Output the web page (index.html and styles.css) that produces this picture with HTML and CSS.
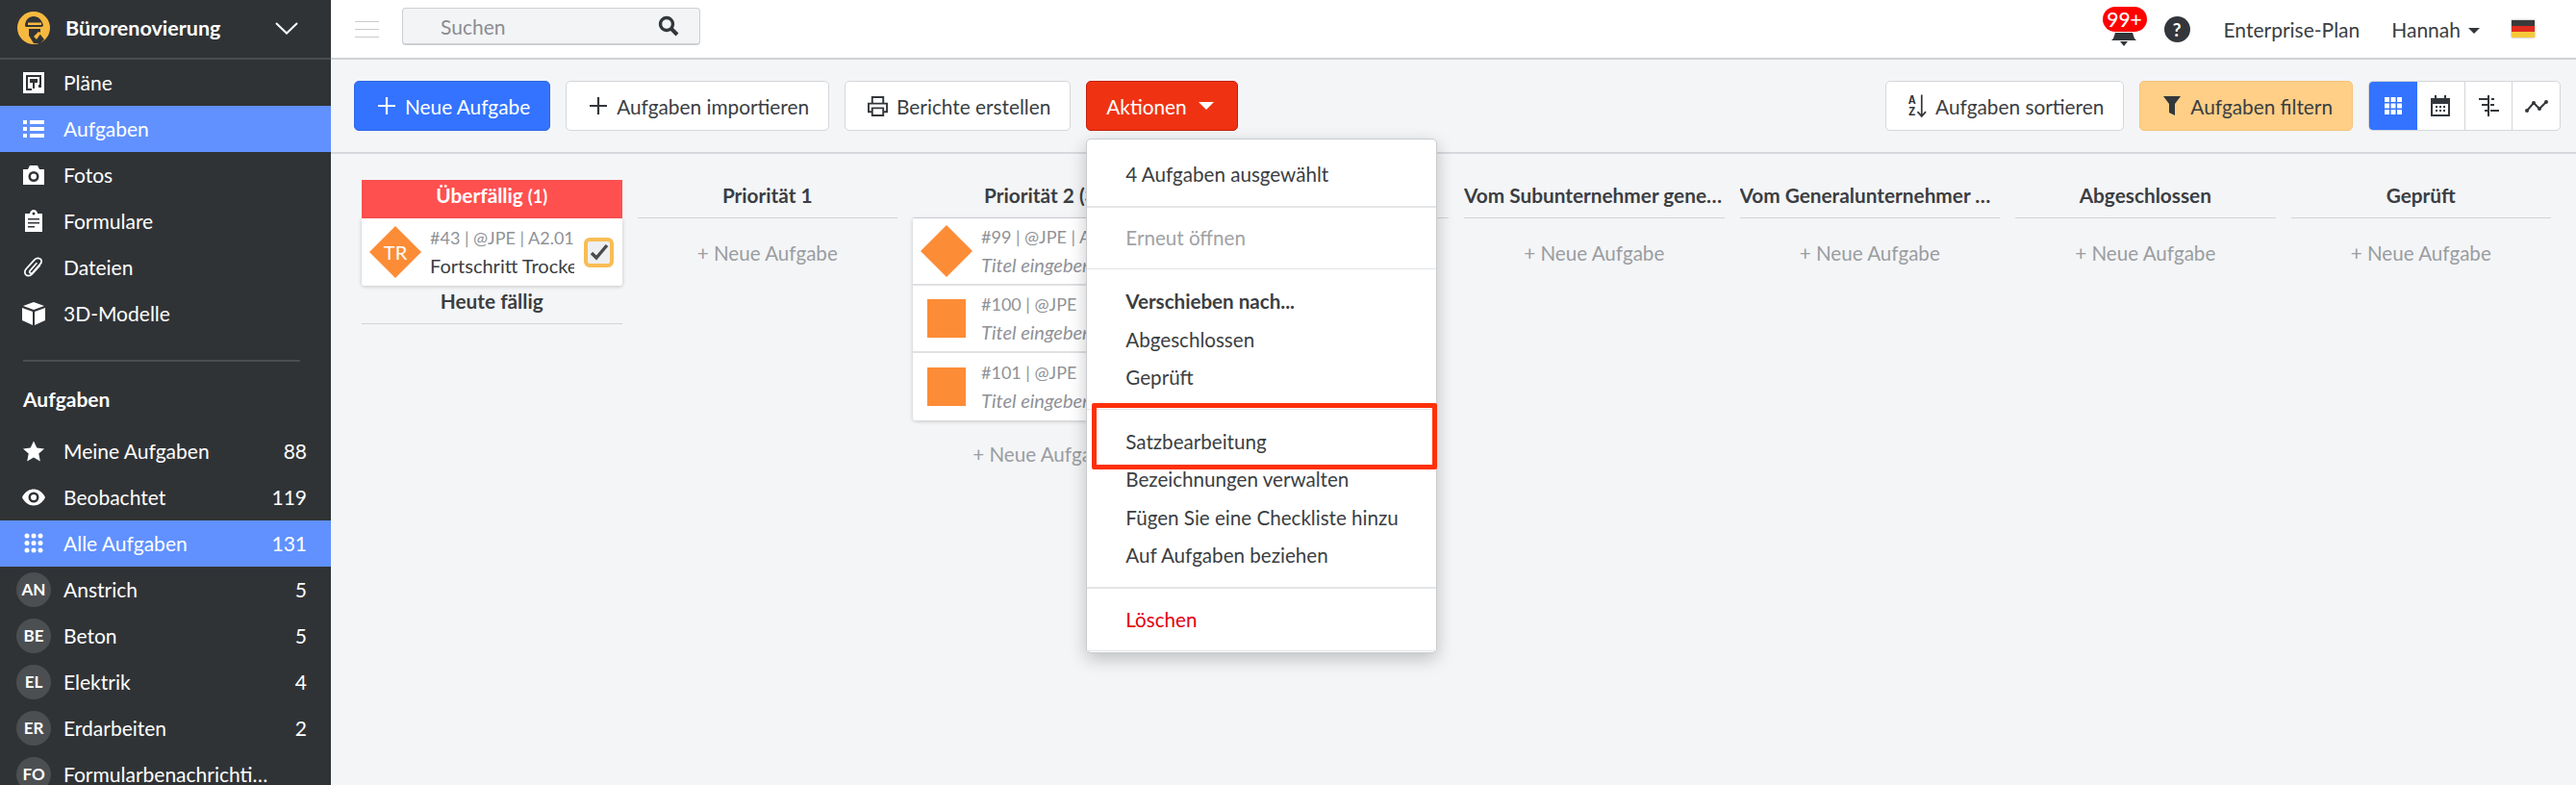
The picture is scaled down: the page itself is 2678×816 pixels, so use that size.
FILE: index.html
```html
<!DOCTYPE html>
<html lang="de">
<head>
<meta charset="utf-8">
<title>Aufgaben</title>
<link rel="stylesheet" href="styles.css">
</head>
<body>
<div class="app">
  <aside class="sidebar">
    <div class="project">
      <svg class="logo" viewBox="0 0 34 34"><circle cx="17" cy="17" r="17" fill="#f6b93f"/><path d="M8 15c0-6 4-10 9-10s9 4 10 10l-2 1H9z" fill="#303336"/><rect x="11" y="11.500" width="14" height="2.500" fill="#f6b93f"/><path d="M12 18h12v6l4 5-4 4h-7l-5-8z" fill="#303336"/><path d="M17 26l5-5 3 1-5 7z" fill="#f6b93f"/></svg>
      <span class="project-name">Bürorenovierung</span>
      <svg class="chevron" viewBox="0 0 24 13"><path d="M1 1l11 10.500L23 1" fill="none" stroke="#fff" stroke-width="2"/></svg>
    </div>
    <nav class="nav">
      <a class="nav-item"><span class="slot"><svg class="ic22" viewBox="0 0 22 22"><path d="M0 0h22v22H0z" fill="#fff"/><path d="M3 3h16v13h-3v-3h1V5H5v12h4v2H3zM7 7h8v4h-3v6h-2v-6H7z" fill="#303336"/></svg></span><span class="label">Pläne</span></a>
      <a class="nav-item active"><span class="slot"><svg class="ic22" viewBox="0 0 22 18"><path d="M0 0h4v4H0zM7 0h15v4H7zM0 7h4v4H0zM7 7h15v4H7zM0 14h4v4H0zM7 14h15v4H7z" fill="#fff"/></svg></span><span class="label">Aufgaben</span></a>
      <a class="nav-item"><span class="slot"><svg class="ic22" viewBox="0 0 22 20"><path fill-rule="evenodd" d="M0 4h5l2-4h8l2 4h5v16H0zM11 6a5.500 5.500 0 1 0 0 11 5.500 5.500 0 0 0 0-11zm0 2.500a3 3 0 1 1 0 6 3 3 0 0 1 0-6z" fill="#fff"/></svg></span><span class="label">Fotos</span></a>
      <a class="nav-item"><span class="slot"><svg class="ic18" viewBox="0 0 18 23"><path fill-rule="evenodd" d="M0 4h5c0-2 2-4 4-4s4 2 4 4h5v19H0zM9 2.500a1.500 1.500 0 1 0 0 3 1.500 1.500 0 0 0 0-3zM3 9v1.500h12V9zm0 4v1.500h12V13zm0 4v1.500h7V17z" fill="#fff"/></svg></span><span class="label">Formulare</span></a>
      <a class="nav-item"><span class="slot"><svg class="ic22" viewBox="0 0 22 23"><path d="M18 9L9 19c-2 2-5 2-6.500 .5S1 15 3 13L12 3c2-2 4-2 6-1s2 4 0 6l-8 9c-1 1-2.500 1-3 .5s-.5-2 .5-3l7-8" fill="none" stroke="#fff" stroke-width="1.800"/></svg></span><span class="label">Dateien</span></a>
      <a class="nav-item"><span class="slot"><svg class="ic24" viewBox="0 0 24 24"><path d="M12 0l11 4-11 4L1 4zM0 6l11 4v14L0 19zM24 6l-11 4v14l11-5z" fill="#fff"/></svg></span><span class="label">3D-Modelle</span></a>
    </nav>
    <hr class="side-rule">
    <h2 class="side-title">Aufgaben</h2>
    <nav class="nav">
      <a class="nav-item"><span class="slot"><svg class="ic22" viewBox="0 0 22 21"><path d="M11 0l3.300 7 7.700 .9-5.700 5.200L17.800 21 11 17l-6.800 4 1.500-7.900L0 7.900 7.700 7z" fill="#fff"/></svg></span><span class="label">Meine Aufgaben</span><span class="count">88</span></a>
      <a class="nav-item"><span class="slot"><svg class="ic24" viewBox="0 0 24 17"><path fill-rule="evenodd" d="M12 0c5 0 9.500 3.200 12 8.500C21.500 13.800 17 17 12 17S2.500 13.800 0 8.500C2.500 3.200 7 0 12 0zm0 3a5.500 5.500 0 1 0 0 11 5.500 5.500 0 0 0 0-11zm0 2.500a3 3 0 1 1 0 6 3 3 0 0 1 0-6z" fill="#fff"/></svg></span><span class="label">Beobachtet</span><span class="count">119</span></a>
      <a class="nav-item active"><span class="slot"><svg class="ic20" viewBox="0 0 20 21"><g fill="#fff"><circle cx="3" cy="3" r="2.500"/><circle cx="10" cy="3" r="2.500"/><circle cx="17" cy="3" r="2.500"/><circle cx="3" cy="10.500" r="2.500"/><circle cx="10" cy="10.500" r="2.500"/><circle cx="17" cy="10.500" r="2.500"/><circle cx="3" cy="18" r="2.500"/><circle cx="10" cy="18" r="2.500"/><circle cx="17" cy="18" r="2.500"/></g></svg></span><span class="label">Alle Aufgaben</span><span class="count">131</span></a>
      <a class="nav-item"><span class="avatar">AN</span><span class="label">Anstrich</span><span class="count">5</span></a>
      <a class="nav-item"><span class="avatar">BE</span><span class="label">Beton</span><span class="count">5</span></a>
      <a class="nav-item"><span class="avatar">EL</span><span class="label">Elektrik</span><span class="count">4</span></a>
      <a class="nav-item"><span class="avatar">ER</span><span class="label">Erdarbeiten</span><span class="count">2</span></a>
      <a class="nav-item"><span class="avatar">FO</span><span class="label label-clip">Formularbenachrichtigungen</span></a>
    </nav>
  </aside>

  <main class="main">
    <header class="topbar">
      <div class="top-left">
        <span class="burger"><i></i><i></i><i></i></span>
        <div class="search">
          <span class="search-text">Suchen</span>
          <svg class="search-icon" viewBox="0 0 22 22"><circle cx="9" cy="9" r="6.500" fill="none" stroke="#33373b" stroke-width="3.400"/><path d="M13.500 13.500L20 20" stroke="#33373b" stroke-width="4"/></svg>
        </div>
      </div>
      <div class="top-right">
        <span class="bell">
          <svg class="bell-icon" viewBox="0 0 26 14"><path d="M4 0h18l2 6 2 2H0l2-2zM9 9h8l-4 5z" fill="#33373b"/></svg>
          <span class="badge">99+</span>
        </span>
        <span class="help">?</span>
        <span class="top-link plan">Enterprise-Plan</span>
        <span class="top-link user">Hannah</span>
        <span class="caret-dark"></span>
        <svg class="flag" viewBox="0 0 24 18"><rect width="24" height="6" fill="#3a3a3a"/><rect y="6" width="24" height="6" fill="#e02b1f"/><rect y="12" width="24" height="6" fill="#f6c838"/></svg>
      </div>
    </header>

    <section class="toolbar">
      <div class="tool-group">
        <button class="btn btn-primary"><svg class="btn-ic" viewBox="0 0 20 20"><path d="M10 1v18M1 10h18" stroke="#fff" stroke-width="2.200"/></svg>Neue Aufgabe</button>
        <button class="btn"><svg class="btn-ic" viewBox="0 0 20 20"><path d="M10 1v18M1 10h18" stroke="#33373b" stroke-width="2.200"/></svg>Aufgaben importieren</button>
        <button class="btn"><svg class="btn-ic btn-ic-print" viewBox="0 0 22 22"><path d="M5 8V1h12v7M5 17H1V8h20v9h-4M5 13h12v8H5z" fill="none" stroke="#33373b" stroke-width="2"/></svg>Berichte erstellen</button>
        <div class="actions">
          <button class="btn btn-danger">Aktionen<span class="caret-white"></span></button>
          <div class="menu">
            <div class="menu-sec menu-sec-first"><div class="menu-item">4 Aufgaben ausgewählt</div></div>
            <div class="menu-sec menu-sec-second"><div class="menu-item muted">Erneut öffnen</div></div>
            <div class="menu-sec">
              <div class="menu-item strong">Verschieben nach...</div>
              <div class="menu-item">Abgeschlossen</div>
              <div class="menu-item">Geprüft</div>
            </div>
            <div class="menu-sec menu-sec-thick">
              <div class="menu-item">Satzbearbeitung</div>
              <div class="menu-item">Bezeichnungen verwalten</div>
              <div class="menu-item">Fügen Sie eine Checkliste hinzu</div>
              <div class="menu-item">Auf Aufgaben beziehen</div>
            </div>
            <div class="menu-sec menu-sec-last"><div class="menu-item danger">Löschen</div></div>
            <div class="highlight"></div>
          </div>
        </div>
      </div>
      <div class="tool-group">
        <button class="btn"><svg class="btn-ic sort-ic" viewBox="0 0 20 26"><text x="0" y="11" class="sort-letter">A</text><text x="0" y="24" class="sort-letter">Z</text><path d="M14.500 1v23M10 19.500l4.500 5 4.500-5" fill="none" stroke="#33373b" stroke-width="1.800"/></svg>Aufgaben sortieren</button>
        <button class="btn btn-filter"><svg class="btn-ic" viewBox="0 0 18 20"><path d="M0 0h18l-6 8v12l-6-3V8z" fill="#33373b"/></svg>Aufgaben filtern</button>
        <div class="views">
          <span class="view view-on"><svg class="view-ic" viewBox="0 0 18 18"><path d="M0 0h5v5H0zM6.500 0h5v5h-5zM13 0h5v5h-5zM0 6.500h5v5H0zM6.500 6.500h5v5h-5zM13 6.500h5v5h-5zM0 13h5v5H0zM6.500 13h5v5h-5zM13 13h5v5h-5z" fill="#fff"/></svg></span>
          <span class="view"><svg class="view-ic cal" viewBox="0 0 20 22"><path fill-rule="evenodd" d="M0 3h4V0h2v3h8V0h2v3h4v19H0zM2 9v11h16V9z" fill="#33373b"/><path d="M5 11h2v2H5zM9 11h2v2H9zM13 11h2v2h-2zM5 15h2v2H5zM9 15h2v2H9zM13 15h2v2h-2z" fill="#33373b"/></svg></span>
          <span class="view"><svg class="view-ic gantt" viewBox="0 0 21 22"><path d="M9 0h2v22H9zM0 3h9v2H0zM13 3h3v2h-3zM3 9h6v2H3zM12 9h4v2h-4zM6 15h3v2H6zM12 15h9v2h-9z" fill="#33373b"/></svg></span>
          <span class="view"><svg class="view-ic trend" viewBox="0 0 24 13"><path d="M2 11l7-8 6 6 7-7" fill="none" stroke="#33373b" stroke-width="2"/><g fill="#33373b"><circle cx="2" cy="11" r="2"/><circle cx="9" cy="3" r="2"/><circle cx="15" cy="9" r="2"/><circle cx="22" cy="2" r="2"/></g></svg></span>
        </div>
      </div>
    </section>

    <section class="board">
      <div class="col">
        <div class="col-head overdue">Überfällig <small>(1)</small></div>
        <div class="cards">
          <div class="card">
            <span class="mark"><span class="diamond"></span><span class="mark-text">TR</span></span>
            <div class="card-body"><div class="meta">#43 | @JPE | A2.01-1</div><div class="title">Fortschritt Trockenbau</div></div>
            <span class="check"><svg viewBox="0 0 20 18"><path d="M2 10l5 5L18 2" fill="none" stroke="#4a4d50" stroke-width="3.400"/></svg></span>
          </div>
        </div>
        <div class="col-head">Heute fällig</div>
      </div>
      <div class="col">
        <div class="col-head">Priorität 1</div>
        <div class="add">+ Neue Aufgabe</div>
      </div>
      <div class="col">
        <div class="col-head">Priorität 2 (3)</div>
        <div class="cards">
          <div class="card"><span class="mark"><span class="diamond"></span></span><div class="card-body"><div class="meta">#99 | @JPE | A2.01-1</div><div class="title empty">Titel eingeben</div></div></div>
          <div class="card"><span class="mark"><span class="square"></span></span><div class="card-body"><div class="meta">#100 | @JPE</div><div class="title empty">Titel eingeben</div></div></div>
          <div class="card"><span class="mark"><span class="square"></span></span><div class="card-body"><div class="meta">#101 | @JPE</div><div class="title empty">Titel eingeben</div></div></div>
        </div>
        <div class="add add-after">+ Neue Aufgabe</div>
      </div>
      <div class="col">
        <div class="col-head">Priorität 3</div>
        <div class="add">+ Neue Aufgabe</div>
      </div>
      <div class="col">
        <div class="col-head">Vom Subunternehmer genehmigt</div>
        <div class="add">+ Neue Aufgabe</div>
      </div>
      <div class="col">
        <div class="col-head">Vom Generalunternehmer genehmigt</div>
        <div class="add">+ Neue Aufgabe</div>
      </div>
      <div class="col">
        <div class="col-head">Abgeschlossen</div>
        <div class="add">+ Neue Aufgabe</div>
      </div>
      <div class="col">
        <div class="col-head">Geprüft</div>
        <div class="add">+ Neue Aufgabe</div>
      </div>
    </section>
  </main>
</div>
</body>
</html>
```
FILE: styles.css
```css
* { box-sizing: border-box; }
html, body { margin: 0; height: 100%; }
body { font-family: Lato, "Liberation Sans", sans-serif; font-size: 21px; color: #3b3e42; overflow: hidden; }
.app { display: flex; height: 816px; overflow: hidden; }

/* Sidebar */
.sidebar { width: 344px; flex: none; background: #303336; color: #fff; overflow: hidden; }
.project { height: 62px; display: flex; align-items: center; padding: 0 34px 2px 18px; border-bottom: 2px solid #4b4e51; }
.logo { width: 34px; height: 34px; flex: none; }
.project-name { flex: 1; margin-left: 16px; font-weight: 700; font-size: 21.500px; }
.chevron { width: 24px; height: 13px; }
.nav { display: flex; flex-direction: column; }
.nav-item { height: 48px; display: flex; align-items: center; padding: 0 25px 1px 17px; }
.nav-item.active { background: #6091ff; }
.slot, .avatar { width: 36px; height: 36px; flex: none; display: flex; align-items: center; justify-content: center; margin-right: 13px; }
.avatar { border-radius: 50%; background: #4c4f52; font-size: 17px; font-weight: 700; }
.ic22 { width: 22px; height: 22px; }
.ic18 { width: 18px; height: 23px; }
.ic20 { width: 20px; height: 21px; }
.ic24 { width: 24px; height: 24px; }
.label { flex: 1; min-width: 0; }
.label-clip { white-space: nowrap; overflow: hidden; text-overflow: ellipsis; margin-right: 38px; }
.count { flex: none; }
.side-rule { margin: 24px 32px 0 24px; border: 0; border-top: 2px solid #4b4e51; }
.side-title { margin: 26px 0 17px 24px; font-size: 21px; line-height: 26px; font-weight: 700; }

/* Top bar */
.main { flex: 1; min-width: 0; background: #f4f5f7; display: flex; flex-direction: column; }
.topbar { height: 62px; flex: none; background: #fff; border-bottom: 2px solid #cfd2d6; display: flex; justify-content: space-between; align-items: center; padding: 0 43px 0 25px; }
.top-left, .top-right { display: flex; align-items: center; }
.burger { width: 25px; height: 17px; display: flex; flex-direction: column; justify-content: space-between; margin-right: 24px; }
.burger i { display: block; height: 1px; background: #c9cbce; }
.search { width: 310px; height: 39px; margin-top: -5px; background: #f3f4f6; border: 1px solid #ccced2; border-bottom-width: 2px; border-radius: 4px; display: flex; align-items: center; justify-content: space-between; padding: 0 21px 0 39px; }
.search-text { color: #8a8d91; font-size: 21px; }
.search-icon { width: 22px; height: 22px; }
.bell { position: relative; width: 46px; height: 36px; margin-right: 18px; }
.bell-icon { position: absolute; left: 9px; bottom: 0; width: 26px; height: 14px; }
.badge { position: absolute; left: 0; top: -5px; width: 46px; height: 26px; border-radius: 13px; background: #f00; color: #fff; text-align: center; font-size: 21px; font-weight: 500; line-height: 25px; }
.help { width: 27px; height: 27px; border-radius: 50%; background: #33373b; color: #fff; font-weight: 700; font-size: 19px; line-height: 27px; text-align: center; margin-right: 35px; }
.top-link { font-size: 21px; }
.plan { margin-right: 33px; }
.caret-dark { width: 0; height: 0; margin: 3px 33px 0 8px; border-left: 6px solid transparent; border-right: 6px solid transparent; border-top: 6px solid #33373b; }
.flag { width: 24px; height: 18px; filter: drop-shadow(0 0 1px rgba(0,0,0,.4)); }

/* Toolbar */
.toolbar { height: 98px; flex: none; border-bottom: 2px solid #d6d8dc; display: flex; justify-content: space-between; padding: 22px 16px 0 24px; }
.tool-group { display: flex; gap: 16px; height: 52px; }
.btn { height: 52px; display: flex; align-items: center; gap: 9px; padding: 0 20px 0 23px; background: #fff; border: 1px solid #d4d6da; border-radius: 5px; font: inherit; font-size: 20.800px; color: #3b3e42; white-space: nowrap; }
.btn-ic { width: 20px; height: 20px; flex: none; }
.btn-ic-print { width: 21px; height: 21px; }
.sort-ic { width: 19px; height: 26px; }
.sort-letter { font: 700 13px "Liberation Mono", monospace; fill: #33373b; }
.btn-primary { background: #3373ff; border-color: #2d68e8; color: #fff; }
.btn-danger { background: #ef3312; border-color: #c4200a; color: #fff; padding: 0 24px 0 20px; gap: 12px; }
.btn-filter { background: #ffcf87; border-color: #f5c47c; }
.caret-white { width: 0; height: 0; border-left: 8px solid transparent; border-right: 8px solid transparent; border-top: 8px solid #fff; }
.actions { position: relative; }
.views { display: flex; width: 200px; height: 52px; background: #fff; border: 1px solid #d4d6da; border-radius: 5px; overflow: hidden; }
.view { flex: 1; display: flex; align-items: center; justify-content: center; border-right: 1px solid #d4d6da; }
.view:last-child { border-right: 0; }
.view-on { flex: none; background: #3373ff; margin: -1px 0 -1px -1px; width: 51px; border-right: 0; }
.view-ic { width: 18px; height: 18px; }
.cal { width: 20px; height: 22px; }
.gantt { width: 21px; height: 22px; }
.trend { width: 24px; height: 13px; }

/* Action menu */
.menu { position: absolute; z-index: 10; left: 0; top: 60px; width: 365px; height: 535px; background: #fff; border: 1px solid #c9cbce; border-radius: 5px; box-shadow: 0 6px 18px rgba(0,0,0,.22); font-size: 20.600px; }
.menu-sec { padding: 14px 0 12px; border-bottom: 1px solid #e4e5e7; }
.menu-sec:last-of-type { border-bottom: 0; }
.menu-sec-first { padding-top: 17px; border-bottom: 2px solid #e4e5e7; }
.menu-sec-second { padding-top: 12px; }
.menu-sec-thick { border-bottom: 2px solid #e4e5e7; }
.menu-sec-last { padding-top: 13px; }
.menu-item { height: 39.500px; line-height: 39.500px; padding-left: 40px; white-space: nowrap; }
.muted { color: #a0a2a5; }
.strong { font-weight: 700; }
.danger { color: #e3000f; }
.highlight { position: absolute; left: 5px; right: -1px; top: 274px; height: 69px; border: 5px solid #ff3008; border-radius: 2px; }

/* Board */
.board { flex: 1; min-height: 0; display: grid; grid-template-columns: repeat(8, minmax(0, 1fr)); gap: 16px; padding: 27px 26px 0 32px; align-items: start; }
.col { min-width: 0; }
.col-head { height: 40px; line-height: 30px; padding-top: 1px; text-align: center; font-weight: 700; font-size: 20.800px; border-bottom: 1px solid #d2d4d8; white-space: nowrap; overflow: hidden; text-overflow: ellipsis; }
.overdue { background: #ff5050; color: #fff; border-bottom: 0; }
.overdue small { font-size: 18px; }
.cards { background: #fff; border-radius: 0 0 3px 3px; box-shadow: 0 1px 4px rgba(0,0,0,.2); }
.card { height: 70px; display: flex; align-items: center; padding: 0 9px 0 8px; border-bottom: 2px solid #dfe0e3; position: relative; overflow: hidden; }
.card:last-child { border-bottom: 0; }
.mark { position: relative; width: 54px; height: 54px; flex: none; display: flex; align-items: center; justify-content: center; margin-right: 9px; }
.diamond { position: absolute; left: 0; top: 0; width: 54px; height: 54px; background: #fd8c37; clip-path: polygon(50% 0, 100% 50%, 50% 100%, 0 50%); }
.square { width: 40px; height: 40px; background: #fd8c37; }
.mark-text { position: relative; color: #fff; font-size: 20px; }
.card-body { flex: none; width: 150px; overflow: hidden; white-space: nowrap; font-size: 20px; line-height: 29px; }
.meta { color: #8f9296; font-size: 18px; }
.title { color: #3b3e42; }
.empty { font-style: italic; color: #8f9296; }
.check { width: 31px; height: 31px; flex: none; margin-left: 10px; border: 4px solid #f8bd55; border-radius: 6px; background: #eeeff0; display: flex; align-items: center; justify-content: center; }
.check svg { width: 20px; height: 18px; }
.add { margin-top: 22px; text-align: center; color: #9a9da1; font-size: 20.600px; line-height: 28px; }
.add-after { margin-top: 21px; }
```
